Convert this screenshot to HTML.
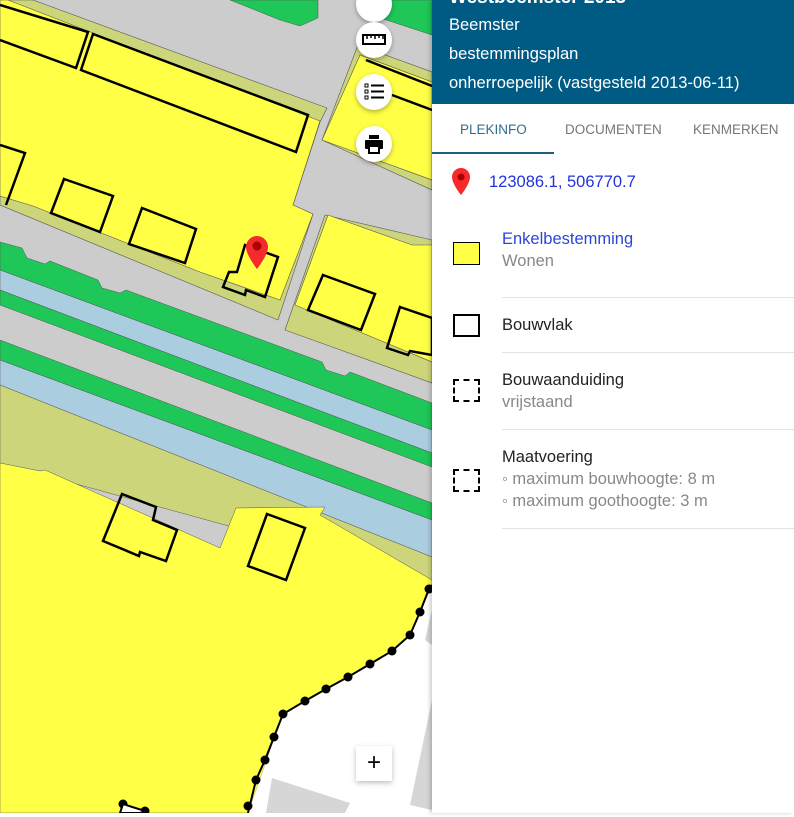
<!DOCTYPE html>
<html><head><meta charset="utf-8"><style>
body{margin:0;width:794px;height:813px;overflow:hidden;position:relative;font-family:"Liberation Sans",sans-serif;background:#fff}
#map{position:absolute;left:0;top:0;width:432px;height:813px}
#panel{position:absolute;left:432px;top:0;width:362px;height:813px;background:#fff;box-shadow:-2px 0 4px rgba(0,0,0,.2)}
.hdr{background:#005b84;height:104px;color:#fff;font-size:16.5px}
.hdr div{position:absolute;left:17px}
.tabs{position:absolute;top:104px;left:0;width:362px;height:50px;font-size:13.5px;color:#777}
.tabs span{position:absolute;top:18px}
.item{position:absolute;left:70px;font-size:16.5px;color:#222;line-height:22px}
.sub{color:#888}
.sep{position:absolute;left:70px;right:0;height:1px;background:#e2e2e2}
.sw{position:absolute;left:21px;width:27px;height:23px;box-sizing:border-box}
.btn{position:absolute;width:36px;height:36px;border-radius:50%;background:#fff;box-shadow:0 2px 5px rgba(0,0,0,.3);left:356px}
</style></head><body>
<svg id="map" width="432" height="813" viewBox="0 0 432 813" xmlns="http://www.w3.org/2000/svg">
<rect width="432" height="813" fill="#cccccc"/>
<polygon points="230,0 318,0 318,18 300,26 280,20" fill="#1ec757" stroke="#555" stroke-width=".5"/>
<polygon points="360,0 432,0 432,35 362,12" fill="#1ec757" stroke="#555" stroke-width=".5"/>
<polygon points="0,0 33,0 327,108 320,122 293,205 313,214 278,320 0,205" fill="#cdd57a" stroke="#555" stroke-width=".6"/>
<polygon points="0,0 8,0 320,121 293,205 313,214 280,300 200,272 33,206 0,196" fill="#ffff45" stroke="#555" stroke-width=".6"/>
<polygon points="358,45 432,72 432,190 322,140" fill="#cdd57a" stroke="#555" stroke-width=".6"/>
<polygon points="360,55 432,82 432,180 322,140" fill="#ffff45" stroke="#555" stroke-width=".6"/>
<polygon points="325,215 432,240 432,383 285,330" fill="#cdd57a" stroke="#555" stroke-width=".6"/>
<polygon points="328,215 412,245 432,245 432,362 295,305" fill="#ffff45" stroke="#555" stroke-width=".6"/>
<polygon points="0,242 22,248 27,258 45,264 50,261 98,280 102,288 120,293 126,290 322,362 326,370 345,376 350,372 432,403 432,430 0,270" fill="#1ec757" stroke="#555" stroke-width=".5"/>
<polygon points="0,270 432,430 432,453 0,290" fill="#abcde0" stroke="#555" stroke-width=".5"/>
<polygon points="0,290 432,453 432,467 0,305" fill="#1ec757" stroke="#555" stroke-width=".5"/>
<polygon points="0,340 432,503 432,520 0,360" fill="#1ec757" stroke="#555" stroke-width=".5"/>
<polygon points="0,360 432,520 432,557 0,385" fill="#abcde0" stroke="#555" stroke-width=".5"/>
<polygon points="0,385 432,557 432,582 0,463" fill="#cdd57a" stroke="#555" stroke-width=".5"/>
<polygon points="0,463 40,471 45,470 220,548 236,508 325,507 320,515 432,580 432,585 429,589 420,612 410,635 392,651 283,714 248,813 0,813" fill="#ffff45" stroke="#555" stroke-width=".5"/>
<polygon points="432,585 429,589 420,612 410,635 392,651 283,714 248,813 432,813" fill="#fff"/>
<polygon points="272,778 350,803 345,813 266,813" fill="#d6d6d6"/>
<polygon points="432,610 425,640 432,645" fill="#d6d6d6"/>
<polygon points="432,700 410,805 432,810" fill="#d6d6d6"/>
<polyline points="432,585 429,589 420,612 410,635 392,651 370,664 348,677 326,689 305,701 283,714 274,737 265,760 256,780 248,813" fill="none" stroke="#000" stroke-width="2"/>
<g fill="#000"><circle cx="429" cy="589" r="4.5"/><circle cx="420" cy="612" r="4.5"/><circle cx="410" cy="635" r="4.5"/><circle cx="392" cy="651" r="4.5"/><circle cx="370" cy="664" r="4.5"/><circle cx="348" cy="677" r="4.5"/><circle cx="326" cy="689" r="4.5"/><circle cx="305" cy="701" r="4.5"/><circle cx="283" cy="714" r="4.5"/><circle cx="274" cy="737" r="4.5"/><circle cx="265" cy="760" r="4.5"/><circle cx="256" cy="780" r="4.5"/><circle cx="248" cy="806" r="4.5"/><circle cx="123" cy="804" r="4.5"/><circle cx="145" cy="811" r="4.5"/></g>
<polygon points="123,804 145,811 140,813 120,813" fill="#fff" stroke="#000" stroke-width="2"/>
<g fill="none" stroke="#000" stroke-width="2.5">
<polyline points="0,5 88,32 76,68 0,40"/>
<polygon points="93,34 308,115 296,152 81,70"/>
<polyline points="0,145 25,153 6,205"/>
<polygon points="64,179 113,196 100,232 51,213"/>
<polygon points="142,208 196,229 185,263 129,244"/>
<polygon points="245,245 278,257 265,297 246,290 245,295 223,287 229,272 237,272"/>
<polygon points="323,275 375,294 361,330 308,310"/>
<polygon points="400,307 432,318 432,355 410,351 408,355 387,348"/>
<polyline points="366,60 432,86"/>
<polyline points="392,95 432,110"/>
<polygon points="122,494 156,507 153,520 177,530 166,561 140,552 139,556 103,541"/>
<polygon points="267,514 305,528 286,580 248,566"/>
</g>
<path d="M257,236 a11,11 0 0 1 11,11 c0,8 -11,22 -11,22 c0,0 -11,-14 -11,-22 a11,11 0 0 1 11,-11z" fill="#f52a2a"/>
<circle cx="257" cy="246" r="4.5" fill="#a00"/>
</svg>
<div class="btn" style="top:-14px"></div>
<div class="btn" style="top:22px"><svg width="36" height="36"><rect x="7" y="13" width="22" height="9" fill="none" stroke="#000" stroke-width="2"/><path d="M11,13v4M15,13v3M19,13v4M23,13v3M27,13v4" stroke="#000" stroke-width="1.5"/></svg></div>
<div class="btn" style="top:74px"><svg width="36" height="36"><rect x="9" y="10" width="3" height="3" fill="none" stroke="#000"/><rect x="9" y="16" width="3" height="3" fill="none" stroke="#000"/><rect x="9" y="22" width="3" height="3" fill="none" stroke="#000"/><path d="M15,11.5h13M15,17.5h13M15,23.5h13" stroke="#000" stroke-width="2"/></svg></div>
<div class="btn" style="top:126px"><svg width="36" height="36"><rect x="13" y="9" width="10" height="4" fill="#000"/><rect x="9" y="14" width="18" height="9" rx="1" fill="#000"/><rect x="13" y="20" width="10" height="7" fill="#fff" stroke="#000" stroke-width="2"/></svg></div>
<div style="position:absolute;left:356px;top:746px;width:36px;height:35px;background:#fff;box-shadow:0 2px 5px rgba(0,0,0,.25);text-align:center;font-size:24px;line-height:34px">+</div>
<div style="position:absolute;left:356px;top:797px;width:36px;height:20px;background:#fff"></div>
<div id="panel">
<div class="hdr">
<div style="top:-13px;font-size:19px;font-weight:bold">Westbeemster 2013</div>
<div style="top:16px">Beemster</div>
<div style="top:45px">bestemmingsplan</div>
<div style="top:74px">onherroepelijk (vastgesteld 2013-06-11)</div>
</div>
<div class="tabs"><span style="left:28px;color:#2f6f90">PLEKINFO</span><span style="left:133px">DOCUMENTEN</span><span style="left:261px">KENMERKEN</span>
<div style="position:absolute;left:0;top:48px;width:122px;height:2px;background:#1f5f80"></div></div>
<svg style="position:absolute;left:18px;top:167px" width="22" height="32"><path d="M11,1 a9,9 0 0 1 9,9 c0,7 -9,18 -9,18 c0,0 -9,-11 -9,-18 a9,9 0 0 1 9,-9z" fill="#f52a2a"/><circle cx="11" cy="10" r="3.5" fill="#a00"/></svg>
<div style="position:absolute;left:57px;top:173px;font-size:16.5px;color:#2233dd">123086.1, 506770.7</div>
<div class="sw" style="top:242px;background:#ffff45;border:1.5px solid #000"></div>
<div class="item" style="top:228px"><span style="color:#2d45d8">Enkelbestemming</span><br><span class="sub">Wonen</span></div>
<div class="sep" style="top:297px"></div>
<div class="sw" style="top:314px;border:2px solid #000"></div>
<div class="item" style="top:314px">Bouwvlak</div>
<div class="sep" style="top:352px"></div>
<div class="sw" style="top:379px;border:2px dashed #000"></div>
<div class="item" style="top:369px">Bouwaanduiding<br><span class="sub">vrijstaand</span></div>
<div class="sep" style="top:429px"></div>
<div class="sw" style="top:469px;border:2px dashed #000"></div>
<div class="item" style="top:446px">Maatvoering<br><span class="sub">&#9702; maximum bouwhoogte: 8 m<br>&#9702; maximum goothoogte: 3 m</span></div>
<div class="sep" style="top:528px"></div>
</div>
</body></html>
